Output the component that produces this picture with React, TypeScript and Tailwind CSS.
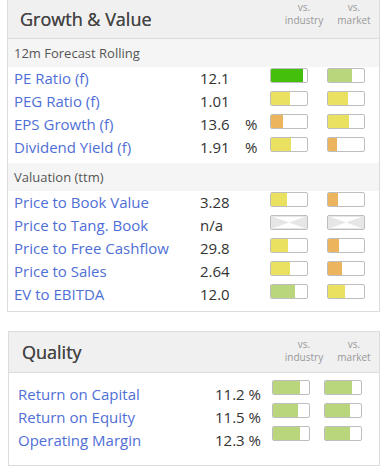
import React from 'react';

type Fill = { c: string; w: number } | null;

type Row = {
  label: string;
  value: string;
  pct?: boolean;
  ind: Fill;
  mkt: Fill;
};

const GREEN = '#44bf0b';
const LGREEN = '#b9d67c';
const YELLOW = '#ebe160';
const ORANGE = '#ecb45c';

const forecast: Row[] = [
  { label: 'PE Ratio (f)', value: '12.1', ind: { c: GREEN, w: 32 }, mkt: { c: LGREEN, w: 24 } },
  { label: 'PEG Ratio (f)', value: '1.01', ind: { c: YELLOW, w: 19 }, mkt: { c: YELLOW, w: 20 } },
  { label: 'EPS Growth (f)', value: '13.6', pct: true, ind: { c: ORANGE, w: 12 }, mkt: { c: YELLOW, w: 21 } },
  { label: 'Dividend Yield (f)', value: '1.91', pct: true, ind: { c: YELLOW, w: 20 }, mkt: { c: ORANGE, w: 9 } },
];

const valuation: Row[] = [
  { label: 'Price to Book Value', value: '3.28', ind: { c: YELLOW, w: 16 }, mkt: { c: ORANGE, w: 10 } },
  { label: 'Price to Tang. Book', value: 'n/a', ind: null, mkt: null },
  { label: 'Price to Free Cashflow', value: '29.8', ind: { c: YELLOW, w: 17 }, mkt: { c: ORANGE, w: 11 } },
  { label: 'Price to Sales', value: '2.64', ind: { c: YELLOW, w: 19 }, mkt: { c: ORANGE, w: 14 } },
  { label: 'EV to EBITDA', value: '12.0', ind: { c: LGREEN, w: 24 }, mkt: { c: YELLOW, w: 17 } },
];

const quality: Row[] = [
  { label: 'Return on Capital', value: '11.2', ind: { c: LGREEN, w: 27 }, mkt: { c: LGREEN, w: 27 } },
  { label: 'Return on Equity', value: '11.5', ind: { c: LGREEN, w: 25 }, mkt: { c: LGREEN, w: 25 } },
  { label: 'Operating Margin', value: '12.3', ind: { c: LGREEN, w: 27 }, mkt: { c: LGREEN, w: 25 } },
];

function Bar({ fill }: { fill: Fill }) {
  if (!fill) {
    return (
      <div className="w-[38px] h-[15px] border border-[#bdbdbd] rounded-[2px] bg-white overflow-hidden">
        <svg width="36" height="13" viewBox="0 0 36 13" className="block">
          <polygon points="0,0 18,6.5 0,13" fill="#e6e6e6" />
          <polygon points="36,0 18,6.5 36,13" fill="#e6e6e6" />
          <rect x="0" y="0" width="36" height="13" fill="none" stroke="#e6e6e6" strokeWidth="2" />
        </svg>
      </div>
    );
  }
  return (
    <div className="w-[38px] h-[15px] border border-[#bdbdbd] rounded-[2px] bg-white overflow-hidden">
      <div className="h-full" style={{ width: fill.w, backgroundColor: fill.c }} />
    </div>
  );
}

function VsLabels() {
  return (
    <div className="flex text-[10px] leading-[13px] text-[#999] text-center pt-[1px]">
      <div className="w-[40px]">
        vs.
        <br />
        industry
      </div>
      <div className="w-[36px] ml-[12px]">
        vs.
        <br />
        market
      </div>
    </div>
  );
}

function MetricRow({ row }: { row: Row }) {
  return (
    <div className="flex h-[23px]">
      <div className="w-[186px] text-[15px] leading-[23px] text-[#4f6fd6]">{row.label}</div>
      <div className="w-[45px] text-[15px] leading-[23px] text-[#333]">{row.value}</div>
      <div className="w-[25px] text-[15px] leading-[23px] text-[#333]">{row.pct ? '%' : ''}</div>
      <div className="pt-[1px] w-[57px]">
        <Bar fill={row.ind} />
      </div>
      <div className="pt-[1px]">
        <Bar fill={row.mkt} />
      </div>
    </div>
  );
}

function QualityRow({ row }: { row: Row }) {
  return (
    <div className="flex h-[23px]">
      <div className="w-[197px] text-[15px] leading-[23px] text-[#4f6fd6] pt-[3px]">{row.label}</div>
      <div className="w-[57px] text-[15px] leading-[23px] text-[#333] pt-[3px] whitespace-pre">{row.value + ' %'}</div>
      <div className="w-[52px]">
        <Bar fill={row.ind} />
      </div>
      <div>
        <Bar fill={row.mkt} />
      </div>
    </div>
  );
}

export default function App() {
  return (
    <div className="w-[387px] h-[470px] bg-white overflow-hidden" style={{ fontFamily: '"Open Sans", "Liberation Sans", sans-serif' }}>
      <div className="ml-[7px] w-[373px] border-x border-b border-[#dcdcdc] bg-white">
        <div className="h-[39px] bg-[#f0f0f0] border-b border-[#dcdcdc] flex">
          <div className="pl-[12px] w-[276px] text-[18px] leading-[38px] text-[#454545] [text-shadow:0_0_0.4px_#454545]">Growth &amp; Value</div>
          <VsLabels />
        </div>
        <div className="h-[28px] bg-[#f5f5f5] pl-[6px] text-[13px] leading-[28px] text-[#555]">12m Forecast Rolling</div>
        <div className="pl-[6px]">
          {forecast.map((r) => (
            <MetricRow key={r.label} row={r} />
          ))}
        </div>
        <div className="h-[28px] mt-[4px] bg-[#f5f5f5] pl-[6px] text-[13px] leading-[28px] text-[#555]">Valuation (ttm)</div>
        <div className="pl-[6px] pb-[5px]">
          {valuation.map((r) => (
            <MetricRow key={r.label} row={r} />
          ))}
        </div>
      </div>

      <div className="ml-[8px] mt-[19px] w-[372px] border border-[#dcdcdc] bg-white">
        <div className="h-[41px] bg-[#f0f0f0] border-b border-[#dcdcdc] flex">
          <div className="pl-[13px] w-[275px] text-[18px] leading-[40px] text-[#454545] [text-shadow:0_0_0.4px_#454545]">Quality</div>
          <div className="pt-[5px]">
            <VsLabels />
          </div>
        </div>
        <div className="pl-[9px] pt-[7px] pb-[16px]">
          {quality.map((r) => (
            <QualityRow key={r.label} row={r} />
          ))}
        </div>
      </div>
    </div>
  );
}
